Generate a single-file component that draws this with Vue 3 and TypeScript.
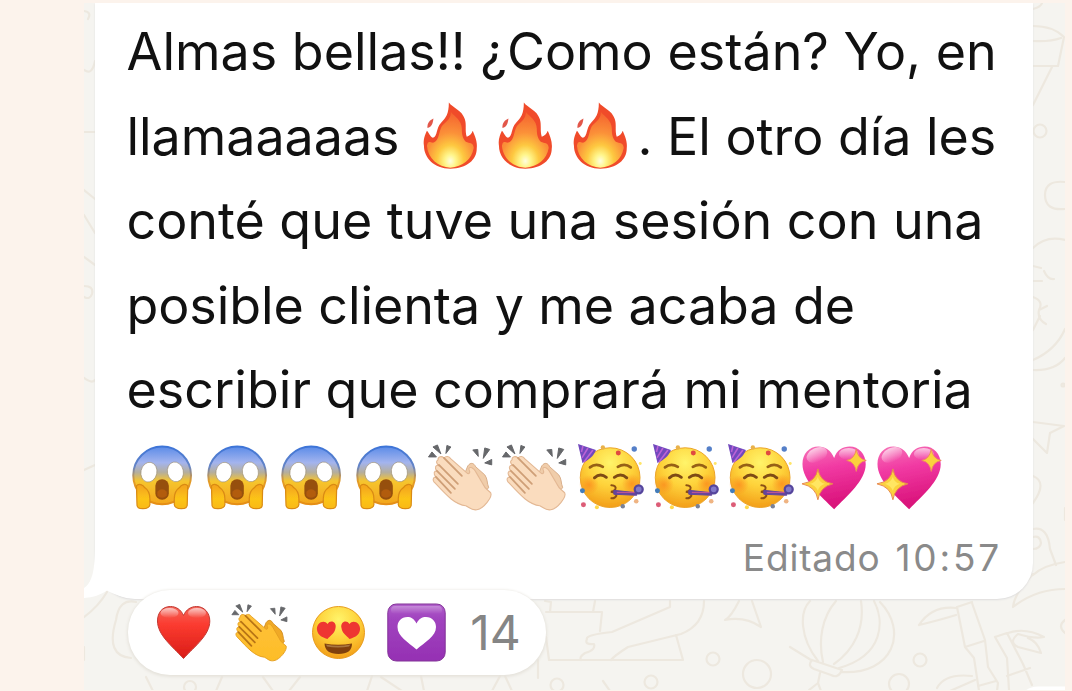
<script setup lang="ts">
type Emoji = 'scream' | 'clap-light' | 'party' | 'sparkle-heart'

const fires: number[] = [1, 2, 3]
const closing: Emoji[] = [
  'scream', 'scream', 'scream', 'scream',
  'clap-light', 'clap-light',
  'party', 'party', 'party',
  'sparkle-heart', 'sparkle-heart',
]
const reactions: string[] = ['red-heart', 'clap-yellow', 'heart-eyes', 'purple-heart']
</script>

<template>
  <main class="page">
    <svg class="defs" width="0" height="0" aria-hidden="true">
      <defs>
        <radialGradient id="g-fire" cx=".5" cy=".88" r=".85">
          <stop offset="0" stop-color="#fffde0" /><stop offset=".14" stop-color="#fff58a" />
          <stop offset=".34" stop-color="#fdc840" /><stop offset=".6" stop-color="#fb9139" />
          <stop offset="1" stop-color="#f5642f" />
        </radialGradient>
        <linearGradient id="g-scream" x1="0" y1="0" x2="0" y2="1">
          <stop offset="0" stop-color="#5b8be8" /><stop offset=".28" stop-color="#a3b4ee" />
          <stop offset=".45" stop-color="#b5ae9c" /><stop offset=".6" stop-color="#f6c52e" />
          <stop offset="1" stop-color="#f3a51d" />
        </linearGradient>
        <linearGradient id="g-rim" x1="0" y1="0" x2="0" y2="1">
          <stop offset="0" stop-color="#3d74d8" /><stop offset=".35" stop-color="#6585c6" />
          <stop offset=".6" stop-color="#e39b28" /><stop offset="1" stop-color="#e58e13" />
        </linearGradient>
        <linearGradient id="g-palm" x1="0" y1="0" x2="0" y2="1">
          <stop offset="0" stop-color="#f3a11c" /><stop offset=".6" stop-color="#fcc419" />
          <stop offset="1" stop-color="#f9b915" />
        </linearGradient>
        <radialGradient id="g-face" cx=".5" cy=".25" r=".78">
          <stop offset="0" stop-color="#fff46a" /><stop offset=".5" stop-color="#fed23a" />
          <stop offset="1" stop-color="#f29a16" />
        </radialGradient>
        <radialGradient id="g-cheek">
          <stop offset="0" stop-color="#fb8a1d" stop-opacity=".75" /><stop offset="1" stop-color="#fb8a1d" stop-opacity="0" />
        </radialGradient>
        <linearGradient id="g-pink" x1="0" y1="0" x2=".2" y2="1">
          <stop offset="0" stop-color="#f774b8" /><stop offset=".4" stop-color="#f13aa3" />
          <stop offset="1" stop-color="#d9127a" />
        </linearGradient>
        <linearGradient id="g-red" x1="0" y1="0" x2="0" y2="1">
          <stop offset="0" stop-color="#f4665a" /><stop offset=".35" stop-color="#fb3b30" />
          <stop offset="1" stop-color="#d91c17" />
        </linearGradient>
        <linearGradient id="g-purple" x1="0" y1="0" x2="0" y2="1">
          <stop offset="0" stop-color="#b05fca" /><stop offset=".25" stop-color="#a144bf" />
          <stop offset="1" stop-color="#9530b3" />
        </linearGradient>
        <linearGradient id="g-hand" x1="0" y1="0" x2="0" y2="1">
          <stop offset="0" stop-color="#ffc13a" /><stop offset="1" stop-color="#fdbd27" />
        </linearGradient>
        <linearGradient id="g-shine" x1="0" y1="0" x2="0" y2="1">
          <stop offset="0" stop-color="#fff" stop-opacity=".65" /><stop offset="1" stop-color="#fff" stop-opacity="0" />
        </linearGradient>
        <filter id="f-soft"><feGaussianBlur stdDeviation=".7" /></filter>

        <symbol id="fire" viewBox="0 0 75 75">
          <g filter="url(#f-soft)">
            <path d="M36 4.500C40 10 49 12 52 21C54 27 52 32 54 39C57 38 59 36 60 33C62 38 65 44 64 51C64 62 54 71 37.500 71C21 71 11 60 11 48C10 42 12 37 14 33C16 35 17 39 20 40C25 38 23 30 28 25C33 20 36 16 36 4.500Z" fill="#f04b2b" />
            <path d="M38 14C41 18 49 22 49 31C49 37 50 41 53 44C57 46 60 44 61 50C59 62 50 69 37.500 70C25 69 15 61 14 48C15 43 16 44 20 45C28 42 25 31 31 26C36 22 38 19 38 14Z" fill="url(#g-fire)" />
            <path d="M14.500 30C14 25 17 22 20.500 20.500C20 25 19 29 14.500 30Z" fill="#e2574a" />
          </g>
        </symbol>

        <symbol id="scream" viewBox="0 0 75 75">
          <g filter="url(#f-soft)">
            <circle cx="37.300" cy="35.500" r="29" fill="url(#g-scream)" stroke="url(#g-rim)" stroke-width="2" />
            <ellipse cx="24" cy="32.300" rx="8" ry="10" fill="#fff" stroke="#9a8c70" stroke-width=".6" transform="rotate(12 24 32.300)" />
            <ellipse cx="50.600" cy="32" rx="8" ry="10" fill="#fff" stroke="#9a8c70" stroke-width=".6" transform="rotate(-12 50.600 32)" />
            <rect x="30.500" y="39.500" width="13.500" height="20.500" rx="6.500" fill="#96500c" />
            <path d="M32.500 52Q37 47 42 52V56Q37 60 32.500 56Z" fill="#b25b0c" />
            <path d="M11.500 46C14 43 18 45 20 48C23 50 25 54 25 59V65C24.500 68 22 69 18 69C14 69 11.500 68 12 64Z" fill="url(#g-palm)" stroke="#d98a12" stroke-width="1.200" />
            <path d="M63 46C60.500 43 56.500 45 54.500 48C51.500 50 49.500 54 49.500 59V65C50 68 52.500 69 56.500 69C60.500 69 63 68 62.500 64Z" fill="url(#g-palm)" stroke="#d98a12" stroke-width="1.200" />
          </g>
        </symbol>

        <symbol id="clap-marks" viewBox="0 0 75 75">
          <path d="M4.500 17L8 12L12.500 17Z M9 7L13.500 5L17 14Z M23 5.500L27 7L22 13.500Z M49 10L54 9.500L54.500 16.500Z M61 8L66 9.500L59.500 18.500Z M61 23L68 19.500V25Z" fill="#66676b" stroke="#66676b" filter="url(#f-soft)" />
        </symbol>
        <symbol id="clap-light" viewBox="0 0 75 75">
          <use href="#clap-marks" />
          <g filter="url(#f-soft)" stroke-linejoin="round">
            <path d="M44 26C47 22 50 23 52 27L61 35C64 39 63 43 65 48L56 56L40 36Z" fill="#f0cdaa" stroke="#d9ae8a" />
            <path d="M14 20C14 16 18 16 20 18C22 16 25 16 27 19L43 33C45 35 47 33 45 29C46 26 50 28 52 32L59 44C61 49 64 50 67 53C69 57 60 69 53 70C48 71 46 68 42 66C31 65 23 56 10 42C8 39 10 37 12 37C9 34 10 31 13 31C10 28 12 24 15 26C12 23 12 21 14 20Z" fill="#fadcbe" stroke="#e3b894" stroke-width="1.100" />
            <path d="M20 18L38 36M15 25L34 44M13 31L31 49M12 37L27 53" fill="none" stroke="#cf9f77" stroke-width="1.800" stroke-linecap="round" />
          </g>
        </symbol>
        <symbol id="clap-yellow" viewBox="0 0 75 75">
          <use href="#clap-marks" />
          <g filter="url(#f-soft)" stroke-linejoin="round">
            <path d="M44 26C47 22 50 23 52 27L61 35C64 39 63 43 65 48L56 56L40 36Z" fill="#f0a928" stroke="#d18a1b" />
            <path d="M14 20C14 16 18 16 20 18C22 16 25 16 27 19L43 33C45 35 47 33 45 29C46 26 50 28 52 32L59 44C61 49 64 50 67 53C69 57 60 69 53 70C48 71 46 68 42 66C31 65 23 56 10 42C8 39 10 37 12 37C9 34 10 31 13 31C10 28 12 24 15 26C12 23 12 21 14 20Z" fill="url(#g-hand)" stroke="#e5a022" stroke-width="1.100" />
            <path d="M20 18L38 36M15 25L34 44M13 31L31 49M12 37L27 53" fill="none" stroke="#b87416" stroke-width="2" stroke-linecap="round" />
          </g>
        </symbol>

        <symbol id="party" viewBox="0 0 75 75">
          <g filter="url(#f-soft)">
            <circle cx="37.300" cy="37.800" r="30" fill="url(#g-face)" stroke="#eba328" stroke-width="1" />
            <circle cx="16" cy="45" r="10" fill="url(#g-cheek)" /><circle cx="59" cy="44" r="10" fill="url(#g-cheek)" />
            <path d="M5 4L23 10C21 16 16 20 9.500 23Z" fill="#7148bd" />
            <path d="M10 6L8.500 12M15 8L9 18M20 10L11 22" stroke="#bb63d6" stroke-width="1.600" />
            <path d="M17 27.500Q23 22.500 30 27M45 27Q52 22.500 58 27.500" fill="none" stroke="#966014" stroke-width="2.700" stroke-linecap="round" />
            <path d="M21.500 38Q27.500 32.500 33.500 37.500M41.500 37.500Q48 32.500 54 38" fill="none" stroke="#7e4b12" stroke-width="2.900" stroke-linecap="round" />
            <path d="M38.500 45.500Q44 46 42.500 49.500Q41 52 38 52Q44 53 43.500 56Q42 59 38.500 58.500" fill="none" stroke="#8b5013" stroke-width="2" stroke-linecap="round" />
            <path d="M41 50.500L64 53V55.500L41 54.500Z" fill="#65459d" stroke="#65459d" />
            <path d="M44 52.700H62" stroke="#bd5294" stroke-width="1.200" />
            <circle cx="66" cy="49.500" r="4" fill="#8279c9" stroke="#55459c" stroke-width="2.300" />
            <circle cx="45.500" cy="13" r="2.500" fill="#e0483f" /><circle cx="61.500" cy="9" r="2.700" fill="#547fc8" />
            <circle cx="9.500" cy="51" r="2.500" fill="#427bb9" /><circle cx="10.500" cy="65" r="2.500" fill="#dc5c77" />
            <circle cx="63.500" cy="61.500" r="2.300" fill="#efb483" /><circle cx="50" cy="66.500" r="2.200" fill="#7a8297" />
            <circle cx="30" cy="7.500" r="2.200" fill="#e9b24b" /><circle cx="67.500" cy="23.500" r="1.500" fill="#ffe567" />
            <circle cx="24" cy="67.500" r="2" fill="#ffd94b" />
          </g>
        </symbol>

        <symbol id="sparkle-heart" viewBox="0 0 75 75">
          <g filter="url(#f-soft)">
            <path d="M37.300 18C34 10 28 6.500 21.500 6.500C12 6.500 5.500 14 5.500 24C5.500 41 24 56 37.300 69.500C50 56 69 41 69 24C69 14 62 6.500 53 6.500C46 6.500 40 10 37.300 18Z" fill="url(#g-pink)" />
            <ellipse cx="20" cy="15" rx="11" ry="7" fill="url(#g-shine)" transform="rotate(-25 20 15)" />
            <ellipse cx="52" cy="14" rx="10" ry="6" fill="url(#g-shine)" />
            <path d="M21 29Q23 42 36 44Q23 47 21 60Q19 47 5 44Q19 42 21 29Z" fill="#fbd13e" stroke="#e88a4e" stroke-width="1" />
            <path d="M59.500 9Q61 19 69.500 20.500Q61 22 59.500 31.500Q58 22 50 20.500Q58 19 59.500 9Z" fill="#fbd13e" stroke="#ef8960" stroke-width="1" />
            <path d="M21 37Q22 43 28 44Q22 46 21 51Q19 46 13 44Q19 43 21 37Z" fill="#ffe662" />
          </g>
        </symbol>

        <symbol id="red-heart" viewBox="0 0 65 65">
          <g filter="url(#f-soft)">
            <path d="M32.500 15.500C30 9.500 25 6.500 19.500 6.500C11.500 6.500 6.500 12.500 6.500 21C6.500 35 21 46 32.500 58.500C44 46 58.800 35 58.800 21C58.800 12.500 53 6.500 45.500 6.500C40 6.500 35 9.500 32.500 15.500Z" fill="url(#g-red)" stroke="#c23932" stroke-width="1" />
            <ellipse cx="18.500" cy="13" rx="9" ry="5" fill="url(#g-shine)" /><ellipse cx="46" cy="13" rx="9" ry="5" fill="url(#g-shine)" />
          </g>
        </symbol>

        <symbol id="heart-eyes" viewBox="0 0 65 65">
          <g filter="url(#f-soft)">
            <circle cx="32.500" cy="32.500" r="26" fill="url(#g-face)" stroke="#e69b1d" stroke-width="1" />
            <path d="M21.500 24C24.500 19 31 22 29.500 28C29 33 24 36 21.500 39C17 37.500 12 36 11 30C10 23 18 19 21.500 24Z" fill="#ee3430" />
            <path d="M43.500 24C40.500 19 34 22 35.500 28C36 33 41 36 43.500 39C48 37.500 53 36 54 30C55 23 47 19 43.500 24Z" fill="#ee3430" />
            <path d="M18.500 43.500Q32 46 46 43.500Q46 54 32.500 54Q19 54 18.500 43.500Z" fill="#80410d" />
            <path d="M20 44.500Q32 47 44.500 44.500L43 46.500Q32 48.500 21 46.500Z" fill="#a87641" />
          </g>
        </symbol>

        <symbol id="purple-heart" viewBox="0 0 65 65">
          <g filter="url(#f-soft)">
            <rect x="3.800" y="4" width="57.400" height="57" rx="8.500" fill="url(#g-purple)" stroke="#823297" stroke-width="1" />
            <rect x="7" y="6" width="51" height="8" rx="4" fill="url(#g-shine)" opacity=".45" />
            <path d="M32.500 23.500C30 18.500 27 17 23.500 17C17 17 13.500 21.500 13.500 27C13.500 36.500 24 42 32.500 49.500C41 42 52 36.500 52 27C52 21.500 48 17 42 17C38 17 35 18.500 32.500 23.500Z" fill="#fff" />
          </g>
        </symbol>
      </defs>
    </svg>

    <section class="chat">
      <svg class="doodles" viewBox="84 3 981 687" aria-hidden="true">
        <g fill="none" stroke="#ede8df" stroke-width="2.200" stroke-linecap="round" stroke-linejoin="round">
          <path d="M84 11Q92 12 88 19M84 70Q92 76 95 61M84 132H95M84 190L95 199M84 215L95 233M84 257L95 265M84 286Q94 286 92 294Q90 300 84 297M84 378Q92 384 95 380M84 470L95 465" />
          <path d="M1033 9Q1041 7 1042 3M1033 26Q1053 26 1064 37L1058 66H1033M1033 41Q1050 42 1061 38M1052 67L1033 105" />
          <circle cx="1040" cy="131" r="6.500" />
          <path d="M1065 182Q1045 180 1045 195Q1045 211 1065 209M1033 248Q1046 235 1065 240M1033 266L1041 268M1044 271Q1048 280 1054 279M1033 281L1042 281" />
          <path d="M1033 297Q1044 301 1039 310L1047 306M1039 310Q1037 319 1046 324M1040 316L1033 330M1033 360Q1056 350 1065 329M1033 370Q1055 371 1065 358" />
          <circle cx="1063" cy="385" r="1.500" />
          <path d="M1033 422L1064 426L1050 433L1047 453L1033 439M1033 476Q1048 482 1033 503M1033 529Q1048 526 1050 549L1056 565M1065 508V520M1033 537Q1040 535 1041 543Q1040 549 1033 549" />
          <path d="M1033 575Q1044 565 1065 562M1065 589Q1036 589 1013 607Q1014 594 1033 574" />
          <path d="M136 602Q119 598 116 620Q105 656 131 658M84 617Q98 607 107 592M84 647V660M146 677L153 691" />
          <circle cx="190" cy="687" r="6" /><path d="M222 677L216 691M263 677L273 691M300 677L289 691M372 676L367 691M381 677L402 691M421 676L424 691M492 691L500 676M505 676L512 691M538 678V660" />
          <path d="M545 601L551 602L550 612M595 601L593 612M546 612H602L600 631M546 637L549 660H683L676 635M670 601V607L612 632Q585 635 587 639Q584 645 594 644Q596 650 585 653Q579 657 581 660M704 601Q704 625 681 634L628 647Q614 656 611 660M739 601Q731 617 725 620Q745 616 761 627L752 601M603 681L610 691" />
          <circle cx="713" cy="659" r="6.500" /><circle cx="757" cy="674" r="14" /><circle cx="651" cy="682" r="6.500" /><circle cx="557" cy="685" r="6.500" />
          <path d="M810 601C799 612 800 638 818 661M836 601C822 617 818 640 823 662M861 601C865 628 854 650 834 664M874 601C884 620 885 655 839 668M880 602C908 631 894 675 841 672M790 647L811 660M812 660L842 670Q838 679 831 675L814 669Q807 666 812 660M820 673L818 683L809 690M818 683L821 691" />
          <circle cx="920" cy="660" r="6.500" /><circle cx="899" cy="684" r="10" />
          <path d="M972 602L957 607L965 647L974 658L979 691M972 603L985 640L988 667L998 683L997 691M965 647L984 641M978 686L996 681M919 625Q932 605 957 608M919 625Q940 620 956 615M937 688Q945 673 972 676M950 691L975 680M995 637L1007 633L1023 664L1032 685M995 637L1007 658L1009 690M1007 676L1030 668M1008 633Q1025 627 1044 637Q1034 639 1018 634Q1008 642 1018 647L1041 653Q1038 642 1028 638M1065 620Q1057 626 1065 633" />
        </g>
        <path d="M1025 691Q1030 686.500 1038 686.500H1065V691Z" fill="#fff" />
      </svg>

      <article class="bubble">
        <svg class="tail" viewBox="84 545 60 56" aria-hidden="true">
          <path d="M95 545C95 571 92 583 84 588V598Q98 597 107 590.500Q119 598 144 599V545Z" fill="#fff" />
        </svg>
        <div class="message">
          <p class="line l1">Almas bellas!! ¿Como están? Yo, en</p>
          <p class="line l2">
            <span class="burning">llamaaaaas</span>
            <span class="fires">
              <svg v-for="n in fires" :key="n" class="emoji"><use href="#fire" /></svg>
            </span>
            <span class="rest">. El otro día les</span>
          </p>
          <p class="line l3">conté que tuve una sesión con una</p>
          <p class="line l4">posible clienta y me acaba de</p>
          <p class="line l5">escribir que comprará mi mentoria</p>
          <p class="line emojis">
            <svg v-for="(name, i) in closing" :key="i" class="emoji"><use :href="`#${name}`" /></svg>
          </p>
        </div>
        <footer class="meta"><span class="edited">Editado</span><span class="time">10:57</span></footer>
      </article>

      <div class="reactions">
        <svg v-for="name in reactions" :key="name" class="reaction"><use :href="`#${name}`" /></svg>
        <span class="count">14</span>
      </div>
    </section>
  </main>
</template>

<style>
body {
  margin: 0;
  background: #fcf3ec;
}
</style>

<style scoped>
.page {
  box-sizing: border-box;
  width: 1072px;
  height: 691px;
  padding: 3px 7px 1px 84px;
  background: #fcf3ec;
  font-family: Inter, "Liberation Sans", sans-serif;
  overflow: hidden;
}
.defs {
  position: absolute;
}
.chat {
  position: relative;
  height: 687px;
  background: #f5f4f0;
  overflow: hidden;
}
.doodles {
  position: absolute;
  inset: 0;
  width: 981px;
  height: 687px;
}
.bubble {
  position: relative;
  box-sizing: border-box;
  width: 938px;
  height: 596px;
  margin-left: 11px;
  padding: 7px 34px 0 31.500px;
  background: #fff;
  border-radius: 0 0 36px 40px;
  box-shadow: 0 1px 2px #dddcdc;
}
.tail {
  position: absolute;
  left: -11px;
  top: 542px;
  width: 60px;
  height: 56px;
}
.message {
  position: relative;
}
.line {
  display: flex;
  align-items: center;
  height: 84.500px;
  margin: 0;
  color: #111;
  font-size: 52px;
  line-height: 84.500px;
  white-space: nowrap;
}
.l2 {
  letter-spacing: -0.040px;
}
.l3 {
  letter-spacing: -0.030px;
}
.l4 {
  letter-spacing: -0.080px;
}
.fires {
  display: flex;
  margin: 0 0 2px 14px;
}
.emoji {
  flex: none;
  width: 74.700px;
  height: 74.700px;
}
.emojis {
  height: 90px;
  margin-left: -1.500px;
}
.meta {
  position: relative;
  display: flex;
  justify-content: flex-end;
  gap: 15px;
  margin-top: 13.500px;
  color: #8a8a8a;
  font-size: 37px;
  line-height: 44px;
}
.edited {
  letter-spacing: 0.850px;
}
.time {
  margin-right: -3px;
  letter-spacing: 2.800px;
}
.reactions {
  position: relative;
  display: flex;
  align-items: center;
  gap: 12.700px;
  box-sizing: border-box;
  width: 418px;
  height: 85px;
  margin: -9px 0 0 44px;
  padding-left: 22.500px;
  background: #fff;
  border-radius: 42px;
  box-shadow: 0 1px 3px 1px #e6e3dc;
}
.reaction {
  flex: none;
  width: 65px;
  height: 65px;
}
.count {
  margin-left: 9px;
  color: #858585;
  font-size: 48px;
}
</style>
